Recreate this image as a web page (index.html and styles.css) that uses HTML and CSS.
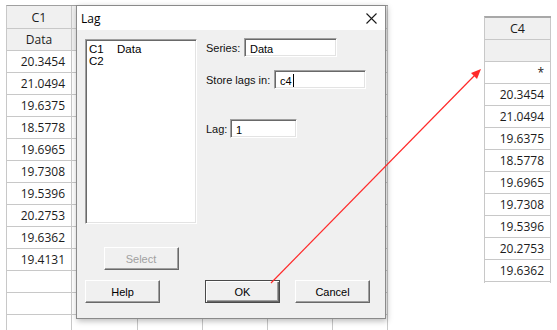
FILE: index.html
```html
<!DOCTYPE html>
<html>
<head>
<meta charset="utf-8">
<link rel="stylesheet" href="styles.css">
</head>
<body>
<div class="desk">
  <div class="sheet sheet-left">
    <div class="cell hd big">C1</div><div class="cell hd"></div><div class="cell hd"></div><div class="cell hd"></div><div class="cell hd"></div><div class="cell hd"></div>
    <div class="cell hd">Data</div><div class="cell hd"></div><div class="cell hd"></div><div class="cell hd"></div><div class="cell hd"></div><div class="cell hd"></div>
    <div class="cell">20.3454</div><div class="cell"></div><div class="cell"></div><div class="cell"></div><div class="cell"></div><div class="cell"></div>
    <div class="cell">21.0494</div><div class="cell"></div><div class="cell"></div><div class="cell"></div><div class="cell"></div><div class="cell"></div>
    <div class="cell">19.6375</div><div class="cell"></div><div class="cell"></div><div class="cell"></div><div class="cell"></div><div class="cell"></div>
    <div class="cell">18.5778</div><div class="cell"></div><div class="cell"></div><div class="cell"></div><div class="cell"></div><div class="cell"></div>
    <div class="cell">19.6965</div><div class="cell"></div><div class="cell"></div><div class="cell"></div><div class="cell"></div><div class="cell"></div>
    <div class="cell">19.7308</div><div class="cell"></div><div class="cell"></div><div class="cell"></div><div class="cell"></div><div class="cell"></div>
    <div class="cell">19.5396</div><div class="cell"></div><div class="cell"></div><div class="cell"></div><div class="cell"></div><div class="cell"></div>
    <div class="cell">20.2753</div><div class="cell"></div><div class="cell"></div><div class="cell"></div><div class="cell"></div><div class="cell"></div>
    <div class="cell">19.6362</div><div class="cell"></div><div class="cell"></div><div class="cell"></div><div class="cell"></div><div class="cell"></div>
    <div class="cell">19.4131</div><div class="cell"></div><div class="cell"></div><div class="cell"></div><div class="cell"></div><div class="cell"></div>
    <div class="cell"></div><div class="cell"></div><div class="cell"></div><div class="cell"></div><div class="cell"></div><div class="cell"></div>
    <div class="cell"></div><div class="cell"></div><div class="cell"></div><div class="cell"></div><div class="cell"></div><div class="cell"></div>
    <div class="cell"></div><div class="cell"></div><div class="cell"></div><div class="cell"></div><div class="cell"></div><div class="cell"></div>
  </div>

  <div class="dialog">
    <div class="titlebar">
      <span class="title">Lag</span>
      <svg class="close" width="11" height="11" viewBox="0 0 11 11"><path d="M0.5 0.5 L10.5 10.5 M10.5 0.5 L0.5 10.5" stroke="#1a1a1a" stroke-width="1.1" fill="none"/></svg>
    </div>
    <div class="dlg-body">
      <div class="listbox">
        <div class="li"><span class="li-c">C1</span><span>Data</span></div>
        <div class="li"><span class="li-c">C2</span></div>
      </div>
      <div class="fields">
        <div class="field f-series"><span class="lbl lbl-series">Series:</span><span class="input in-series">Data</span></div>
        <div class="field f-store"><span class="lbl lbl-store">Store lags in:</span><span class="input in-store">c4<span class="caret"></span></span></div>
        <div class="field f-lag"><span class="lbl lbl-lag">Lag:</span><span class="input in-lag">1</span></div>
      </div>
      <div class="btn btn-select">Select</div>
      <div class="btnrow">
        <div class="btn">Help</div>
        <div class="btn btn-default btn-ok">OK</div>
        <div class="btn btn-cancel">Cancel</div>
      </div>
    </div>
  </div>

  <div class="sheet sheet-right">
    <div class="cell hd big">C4</div>
    <div class="cell hd"></div>
    <div class="cell">*</div>
    <div class="cell">20.3454</div>
    <div class="cell">21.0494</div>
    <div class="cell">19.6375</div>
    <div class="cell">18.5778</div>
    <div class="cell">19.6965</div>
    <div class="cell">19.7308</div>
    <div class="cell">19.5396</div>
    <div class="cell">20.2753</div>
    <div class="cell">19.6362</div>
    <div class="cell"></div>
  </div>

  <svg class="arrow" width="557" height="330" viewBox="0 0 557 330">
    <line x1="271" y1="283" x2="475" y2="75" stroke="#ff2a2a" stroke-width="1.2"/>
    <polygon points="481,69 477,79 471,73" fill="#ff2a2a"/>
  </svg>
</div>
</body>
</html>
```

FILE: styles.css
```css
html, body {
  margin: 0;
  padding: 0;
  background: #fff;
}

.desk {
  position: relative;
  width: 557px;
  height: 330px;
  overflow: hidden;
  background: #fff;
}

/* worksheets */
.sheet {
  position: absolute;
  display: grid;
  box-sizing: border-box;
  overflow: hidden;
  background: #fff;
  font-family: "Open Sans", "Noto Sans", sans-serif;
  font-size: 12px;
  color: #1c1c1c;
  border-top: 1px solid #a0a0a0;
  border-left: 1px solid #c8c8c8;
}

.sheet-left {
  left: 6px;
  top: 5px;
  height: 325px;
  grid-template-columns: 65px 66px 65px 65px 65px 55px;
  grid-template-rows: 23px;
  grid-auto-rows: 22px;
}

.sheet-right {
  left: 484px;
  top: 16px;
  height: 267px;
  grid-template-columns: 66px;
  grid-auto-rows: 22px;
  border-top: 2px solid #a8a8a8;
}

.cell {
  box-sizing: border-box;
  border-right: 1px solid #c8c8c8;
  border-bottom: 1px solid #c8c8c8;
  display: flex;
  align-items: center;
  justify-content: flex-end;
  padding-right: 6px;
  white-space: nowrap;
}

.cell.hd {
  background: #f0f0f0;
  justify-content: center;
  padding-right: 0;
}

.cell.big {
  font-size: 12.5px;
}

/* dialog */
.dialog {
  position: absolute;
  left: 76px;
  top: 5px;
  width: 310px;
  height: 314px;
  box-sizing: border-box;
  border: 1px solid #8a8a8a;
  background: #f0f0f0;
  box-shadow: 1px 2px 6px rgba(0, 0, 0, 0.28);
  font-family: "Liberation Sans", Arial, sans-serif;
  font-size: 11px;
  color: #000;
}

.titlebar {
  height: 24px;
  background: #fff;
  display: flex;
  align-items: center;
  justify-content: space-between;
  padding: 0 8px 0 4px;
}

.title {
  font-family: "Open Sans", "Noto Sans", sans-serif;
  font-size: 12px;
  color: #000;
}

.close {
  display: block;
  margin-top: 1px;
}

.dlg-body {
  display: grid;
  grid-template-columns: 112px 1fr;
  column-gap: 9px;
  padding: 9px 8px 0 8px;
}

.listbox {
  grid-column: 1;
  grid-row: 1;
  box-sizing: border-box;
  height: 185px;
  background: #fff;
  border: 1px solid;
  border-color: #a0a0a0 #fff #fff #a0a0a0;
  box-shadow: inset 1px 1px 0 #696969, inset -1px -1px 0 #e3e3e3;
  padding: 3px 0 0 3px;
}

.li {
  display: flex;
  line-height: 12px;
  height: 12px;
  font-size: 11.5px;
}

.li-c {
  width: 28px;
}

.fields {
  grid-column: 2;
  grid-row: 1;
  margin-top: -1px;
  display: flex;
  flex-direction: column;
}

.field {
  display: flex;
  align-items: center;
  height: 19px;
}

.f-store {
  margin-top: 13px;
}

.f-lag {
  margin-top: 30px;
}

.lbl {
  font-size: 11px;
  color: #111;
}

.lbl-series { width: 38px; }
.lbl-store { width: 68px; }
.lbl-lag { width: 24px; }

.input {
  box-sizing: border-box;
  height: 19px;
  background: #fff;
  border: 1px solid;
  border-color: #a0a0a0 #fff #fff #a0a0a0;
  box-shadow: inset 1px 1px 0 #696969, inset -1px -1px 0 #e3e3e3;
  padding: 2px 0 0 5px;
  font-size: 11px;
  line-height: 14px;
  display: flex;
  align-items: center;
}

.in-series { width: 93px; }
.in-store { width: 92px; }
.in-lag { width: 67px; }

.caret {
  display: inline-block;
  width: 1px;
  height: 13px;
  background: #000;
  margin-left: 1px;
}

.btn {
  box-sizing: border-box;
  width: 75px;
  height: 23px;
  display: flex;
  align-items: center;
  justify-content: center;
  background: #f0f0f0;
  border: 1px solid;
  border-color: #fff #696969 #696969 #fff;
  box-shadow: inset -1px -1px 0 #a0a0a0;
  font-size: 11px;
  color: #000;
}

.btn-select {
  grid-column: 1;
  grid-row: 2;
  justify-self: center;
  margin-top: 23px;
  color: #a0a0a0;
}

.btnrow {
  grid-column: 1 / span 2;
  grid-row: 3;
  display: flex;
  margin-top: 10px;
}

.btn-default {
  border: 1px solid #4a4a4a;
  box-shadow: inset 1px 1px 0 #fff, inset -1px -1px 0 #696969, inset -2px -2px 0 #a0a0a0;
}

.btn-ok {
  margin-left: 45px;
}

.btn-cancel {
  margin-left: 15px;
}

.arrow {
  position: absolute;
  left: 0;
  top: 0;
  pointer-events: none;
}
```
